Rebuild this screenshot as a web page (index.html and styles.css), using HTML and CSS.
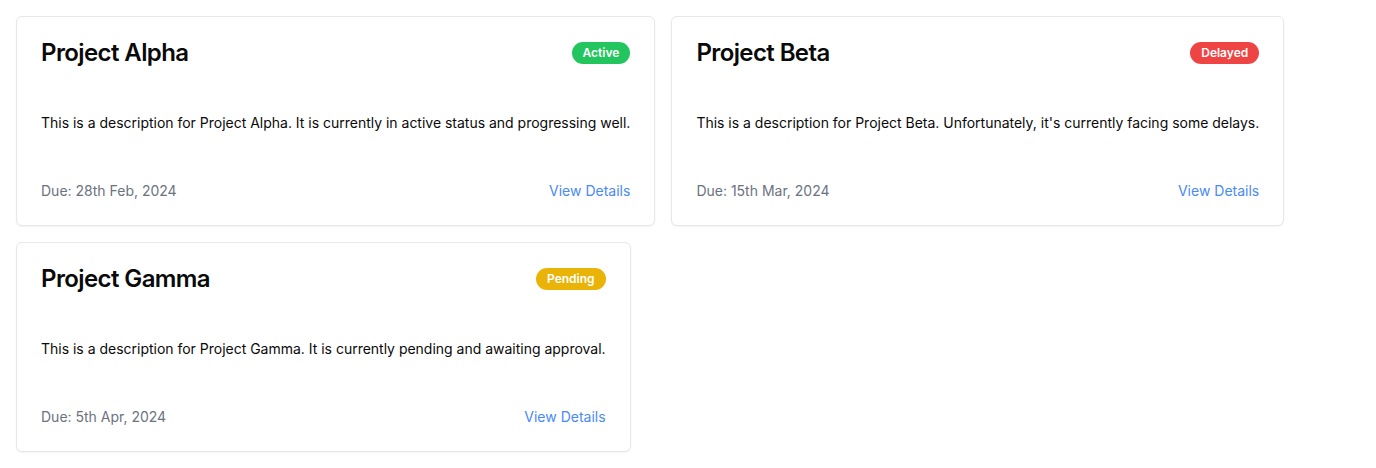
FILE: index.html
```html
<!DOCTYPE html>
<html lang="en">
<head>
<meta charset="utf-8">
<title>Projects</title>
<link rel="stylesheet" href="styles.css">
</head>
<body>
<div class="grid">
  <div class="card">
    <div class="card-header">
      <h2 class="card-title">Project Alpha</h2>
      <span class="badge badge-green">Active</span>
    </div>
    <div class="card-content">
      <p>This is a description for Project Alpha. It is currently in active status and progressing well.</p>
    </div>
    <div class="card-footer">
      <span class="due">Due: 28th Feb, 2024</span>
      <a class="link" href="#">View Details</a>
    </div>
  </div>
  <div class="card">
    <div class="card-header">
      <h2 class="card-title">Project Beta</h2>
      <span class="badge badge-red">Delayed</span>
    </div>
    <div class="card-content">
      <p>This is a description for Project Beta. Unfortunately, it's currently facing some delays.</p>
    </div>
    <div class="card-footer">
      <span class="due">Due: 15th Mar, 2024</span>
      <a class="link" href="#">View Details</a>
    </div>
  </div>
  <div class="card">
    <div class="card-header">
      <h2 class="card-title">Project Gamma</h2>
      <span class="badge badge-yellow">Pending</span>
    </div>
    <div class="card-content">
      <p>This is a description for Project Gamma. It is currently pending and awaiting approval.</p>
    </div>
    <div class="card-footer">
      <span class="due">Due: 5th Apr, 2024</span>
      <a class="link" href="#">View Details</a>
    </div>
  </div>
</div>
</body>
</html>
```
FILE: styles.css
```css
* { box-sizing: border-box; }
html, body { margin: 0; padding: 0; background: #fff; }
body {
  font-family: Inter, "Noto Sans", sans-serif;
  color: #0a0a0a;
}
.grid {
  display: flex;
  flex-wrap: wrap;
  gap: 16px;
  padding: 16px;
  align-items: flex-start;
}
.card {
  border: 1px solid #e5e7eb;
  border-radius: 6px;
  background: #fff;
  box-shadow: 0 1px 2px rgba(0,0,0,0.05);
}
.card-header {
  display: flex;
  justify-content: space-between;
  align-items: center;
  padding: 24px;
}
.card-title {
  margin: 0;
  font-size: 24px;
  line-height: 24px;
  font-weight: 600;
  letter-spacing: -0.6px;
}
.badge {
  display: inline-block;
  border: 1px solid transparent;
  border-radius: 9999px;
  padding: 2px 10px;
  font-size: 12px;
  line-height: 16px;
  font-weight: 600;
  color: #fff;
}
.badge-green { background: #22c55e; }
.badge-red { background: #ef4444; }
.badge-yellow { background: #eab308; }
.card-content { padding: 24px; }
.card-content p {
  margin: 0;
  font-size: 14px;
  line-height: 20px;
  letter-spacing: -0.01px;
}
.card-footer {
  display: flex;
  justify-content: space-between;
  align-items: center;
  padding: 24px;
  font-size: 14px;
  line-height: 20px;
}
.due { color: #6b7280; }
.link { color: #4a8af4; text-decoration: none; }
```
